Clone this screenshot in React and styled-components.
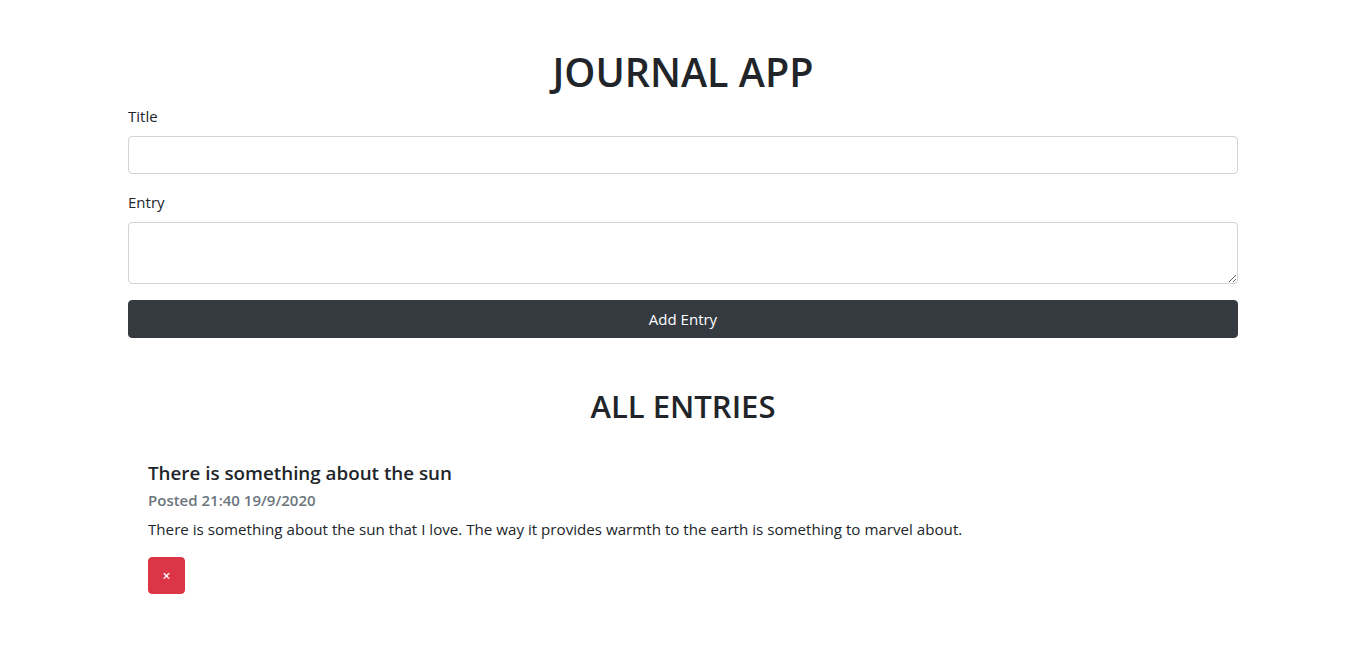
import styled, { createGlobalStyle } from 'styled-components';

const GlobalStyle = createGlobalStyle`
  * { box-sizing: border-box; }
  body {
    margin: 0;
    background: #fff;
    color: #212529;
    font-family: "Open Sans", "Noto Sans", "Liberation Sans", sans-serif;
    font-size: 16px;
    line-height: 1.5;
  }
`;

const entries = [
  {
    id: 1,
    title: 'There is something about the sun',
    posted: 'Posted 21:40 19/9/2020',
    body: 'There is something about the sun that I love. The way it provides warmth to the earth is something to marvel about.',
  },
];

const App = () => {
  return (
    <>
      <GlobalStyle />
      <Container>
        <Heading>JOURNAL APP</Heading>
        <Form onSubmit={(e) => e.preventDefault()}>
          <FormGroup>
            <Label htmlFor='title'>Title</Label>
            <Input id='title' type='text' />
          </FormGroup>
          <FormGroup>
            <Label htmlFor='entry'>Entry</Label>
            <TextArea id='entry' rows={2} />
          </FormGroup>
          <AddButton type='submit'>Add Entry</AddButton>
        </Form>

        <SubHeading>ALL ENTRIES</SubHeading>
        {entries.map((entry) => (
          <Card key={entry.id}>
            <CardTitle>{entry.title}</CardTitle>
            <CardSubtitle>{entry.posted}</CardSubtitle>
            <CardText>{entry.body}</CardText>
            <DeleteButton type='button'>×</DeleteButton>
          </Card>
        ))}
      </Container>
    </>
  );
};

// styles
const Container = styled.div`
  width: 1140px;
  margin: 0 auto;
  padding: 48px 15px 40px;
`;
const Heading = styled.h1`
  margin: 0 0 8px;
  text-align: center;
  font-size: 39.5px;
  font-weight: 600;
  line-height: 48px;
`;
const Form = styled.form``;
const FormGroup = styled.div`
  margin-bottom: 16px;
`;
const Label = styled.label`
  display: block;
  margin-bottom: 8px;
  font-size: 15px;
  line-height: 24px;
`;
const Input = styled.input`
  display: block;
  width: 100%;
  height: 38px;
  padding: 6px 12px;
  border: 1px solid #ced4da;
  border-radius: 4px;
  font: inherit;
  outline: none;
`;
const TextArea = styled.textarea`
  display: block;
  width: 100%;
  height: 62px;
  padding: 6px 12px;
  border: 1px solid #ced4da;
  border-radius: 4px;
  font: inherit;
  resize: vertical;
  outline: none;
`;
const AddButton = styled.button`
  display: block;
  width: 100%;
  height: 38px;
  border: 1px solid #343a40;
  border-radius: 4px;
  background: #343a40;
  color: #fff;
  font-family: inherit;
  font-size: 15px;
  line-height: 24px;
`;
const SubHeading = styled.h2`
  margin: 49px 0 16px;
  text-align: center;
  font-size: 31px;
  font-weight: 600;
  line-height: 38px;
`;
const Card = styled.div`
  padding: 20px;
`;
const CardTitle = styled.h5`
  margin: 0 0 12px;
  font-size: 18.8px;
  font-weight: 600;
  line-height: 24px;
`;
const CardSubtitle = styled.h6`
  margin: -6px 0 7px;
  color: #6c757d;
  font-size: 15px;
  font-weight: 600;
  line-height: 19px;
`;
const CardText = styled.p`
  margin: 0 0 16px;
  font-size: 15.15px;
  line-height: 24px;
`;
const DeleteButton = styled.button`
  display: flex;
  align-items: center;
  justify-content: center;
  width: 37px;
  height: 37px;
  padding: 0;
  border: 1px solid #dc3545;
  border-radius: 4px;
  background: #dc3545;
  color: #fff;
  font-family: inherit;
  font-size: 14px;
  font-weight: 600;
`;

export default App;
